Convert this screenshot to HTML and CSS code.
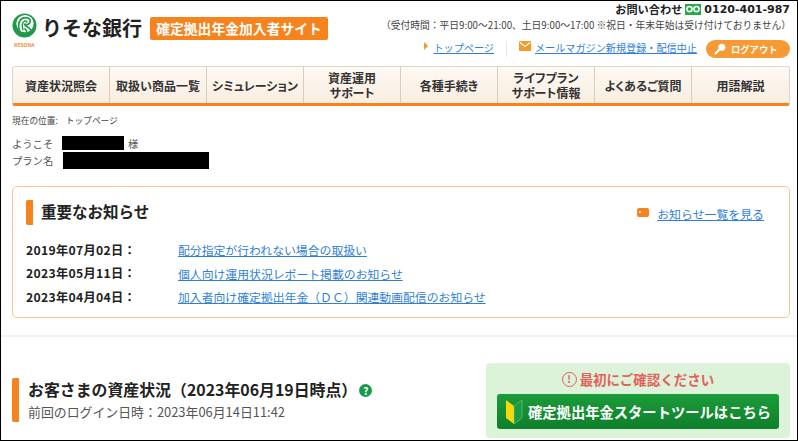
FILE: index.html
```html
<!DOCTYPE html>
<html lang="ja">
<head>
    <meta charset="UTF-8">
    <meta name="viewport" content="width=device-width, initial-scale=1.0">
    <title>確定拠出年金加入者サイト</title>
    <link rel="stylesheet" href="styles.css">
</head>
<body>
    <div class="page">
        <div class="header">
            <div class="logoArea">
                <div class="logo">
                    <svg class="logoMark" viewBox="0 0 26 26" width="25" height="25">
                        <circle cx="13" cy="13" r="12.500" fill="#1f9a4a"/>
                        <circle cx="13.500" cy="11" r="9" fill="#fff"/>
                        <path d="M8 19C5.500 13 7 6.500 12 5C16 4 19.500 6 19 9C18.500 12 15 12.500 12.500 11.500" fill="none" stroke="#1f9a4a" stroke-width="1.800"/>
                        <path d="M11.500 18C10 14 10.500 9.500 13 8.500C15 8 16 9 15 10" fill="none" stroke="#1f9a4a" stroke-width="1.500"/>
                        <path d="M13 13C16.500 14 19.500 17 20.500 20" fill="none" stroke="#1f9a4a" stroke-width="1.800"/>
                        <path d="M13 16C14.500 17.500 15.500 19 16 21" fill="none" stroke="#1f9a4a" stroke-width="1.500"/>
                    </svg>
                    <span class="logoSub">RESONA</span>
                </div>
                <span class="logoName">りそな銀行</span>
                <span class="siteBadge">確定拠出年金加入者サイト</span>
            </div>
            <div class="headRight">
                <div class="tel">
                    お問い合わせ
                    <svg class="freeDial" viewBox="0 0 16 11" width="16" height="11">
                        <rect width="16" height="11" fill="#27a84a"/>
                        <circle cx="4.500" cy="5" r="2.600" fill="none" stroke="#fff" stroke-width="1.500"/>
                        <circle cx="11.500" cy="5" r="2.600" fill="none" stroke="#fff" stroke-width="1.500"/>
                    </svg>
                    <span class="telNum">0120-401-987</span>
                </div>
                <div class="hours">（受付時間：平日9:00～21:00、土日9:00～17:00 ※祝日・年末年始は受け付けておりません）</div>
                <div class="headLinks">
                    <span class="arrow"></span>
                    <a href="#" class="topLink">トップページ</a>
                    <span class="headSep"></span>
                    <svg class="mailIcon" viewBox="0 0 12 10" width="12" height="10">
                        <rect width="12" height="10" rx="1" fill="#f39a27"/>
                        <path d="M1 1.500L6 5.500L11 1.500" fill="none" stroke="#fff" stroke-width="1.200"/>
                    </svg>
                    <a href="#" class="mailLink">メールマガジン新規登録・配信中止</a>
                    <div class="logout">
                        <svg viewBox="0 0 14 14" width="13" height="13">
                            <circle cx="9.500" cy="4.500" r="3.800" fill="#fff"/>
                            <path d="M7 7L2 12" stroke="#fff" stroke-width="2.400"/>
                        </svg>
                        ログアウト
                    </div>
                </div>
            </div>
        </div>

        <ul class="nav">
            <li><span>資産状況照会</span></li>
            <li><span>取扱い商品一覧</span></li>
            <li><span>シミュレーション</span></li>
            <li><span class="twoLine">資産運用<br>サポート</span></li>
            <li><span>各種手続き</span></li>
            <li><span class="twoLine">ライフプラン<br>サポート情報</span></li>
            <li><span>よくあるご質問</span></li>
            <li><span>用語解説</span></li>
        </ul>

        <div class="crumb"><span>現在の位置:</span><span>トップページ</span></div>

        <div class="userRow">
            <span class="userLabel">ようこそ</span>
            <span class="mask maskName"></span>
            <span class="sama">様</span>
        </div>
        <div class="userRow planRow">
            <span class="userLabel">プラン名</span>
            <span class="mask maskPlan"></span>
        </div>

        <div class="notice">
            <div class="noticeHead">
                <h2 class="noticeTitle">重要なお知らせ</h2>
                <div class="noticeMore">
                    <span class="tagIcon"></span>
                    <a href="#">お知らせ一覧を見る</a>
                </div>
            </div>
            <div class="newsRow"><span class="newsDate">2019年07月02日：</span><a href="#">配分指定が行われない場合の取扱い</a></div>
            <div class="newsRow"><span class="newsDate">2023年05月11日：</span><a href="#">個人向け運用状況レポート掲載のお知らせ</a></div>
            <div class="newsRow"><span class="newsDate">2023年04月04日：</span><a href="#">加入者向け確定拠出年金（ＤＣ）関連動画配信のお知らせ</a></div>
        </div>

        <div class="line"></div>

        <div class="assets">
            <div class="assetsHead">
                <h2>お客さまの資産状況（2023年06月19日時点）<span class="help">?</span></h2>
                <p>前回のログイン日時：2023年06月14日11:42</p>
            </div>
            <div class="startBox">
                <div class="startNote">
                    <span class="exclaim">!</span>最初にご確認ください
                </div>
                <div class="startBtn">
                    <svg viewBox="0 0 18 26" width="18" height="26">
                        <path d="M9 7L1 1V19L9 25Z" fill="#f5d90a"/>
                        <path d="M9 7L17 1V19L9 25Z" fill="#1c9a3f" stroke="#7fc98f" stroke-width="0.600"/>
                    </svg>
                    確定拠出年金スタートツールはこちら
                </div>
            </div>
        </div>
    </div>
</body>
</html>
```

FILE: styles.css
```css
*{
    padding: 0;
    margin: 0;
    list-style: none;
    box-sizing: border-box;
}
html,body{
    height: 441px;
    overflow: hidden;
    background-color: #fff;
}
body{
    font-family: "Noto Sans CJK JP", "Open Sans", sans-serif;
    color: #333;
}
a{
    color: #2f7fd6;
}
.page{
    width: 798px;
    height: 441px;
    border: 1px solid #000;
    padding: 0 7px 0 11px;
    overflow: hidden;
}

/* header */
.header{
    display: flex;
    justify-content: space-between;
    height: 65px;
}
.logoArea{
    display: flex;
    align-items: flex-start;
    padding-top: 12px;
}
.logo{
    width: 30px;
    display: flex;
    flex-direction: column;
}
.logoSub{
    margin-top: 3px;
    padding-left: 2px;
    font-size: 5px;
    line-height: 7px;
    font-weight: 700;
    color: #e8913a;
}
.logoName{
    font-size: 20px;
    line-height: 30px;
    font-weight: 700;
    color: #222;
    width: 108px;
    white-space: nowrap;
}
.siteBadge{
    margin-top: 4px;
    width: 178px;
    height: 23px;
    background-color: #f5841f;
    border-radius: 2px;
    color: #fff;
    font-size: 13.800px;
    line-height: 23px;
    font-weight: 700;
    text-align: center;
}
.headRight{
    display: flex;
    flex-direction: column;
    align-items: flex-end;
}
.tel{
    height: 16px;
    display: flex;
    align-items: center;
    font-size: 11.200px;
    font-weight: 700;
    color: #222;
}
.freeDial{
    margin: 0 3px 0 3px;
}
.telNum{
    font-family: "DejaVu Sans", sans-serif;
    font-size: 11px;
}
.hours{
    height: 18px;
    margin-right: -1px;
    font-size: 9.750px;
    line-height: 16px;
    color: #444;
    white-space: nowrap;
}
.headLinks{
    display: flex;
    align-items: center;
    height: 22px;
    margin-top: 3px;
    font-size: 10.150px;
}
.headLinks a{
    margin-top: -4px;
}
.arrow{
    width: 0;
    height: 0;
    border-left: 4px solid #f39a27;
    border-top: 4px solid transparent;
    border-bottom: 4px solid transparent;
    margin: -6px 5px 0 0;
}
.headSep{
    width: 1px;
    height: 16px;
    background-color: #e8e8e8;
    margin: 0 12px;
}
.mailIcon{
    margin: -6px 4px 0 0;
}
.logout{
    width: 84px;
    height: 18px;
    margin-left: 9px;
    background-color: #f79a34;
    border-radius: 9px;
    display: flex;
    align-items: center;
    padding-left: 7px;
    gap: 5px;
    color: #fff;
    font-size: 9.300px;
    font-weight: 700;
}

/* nav */
.nav{
    display: flex;
    width: 778px;
    height: 40px;
    background: linear-gradient(#fdf9f3, #f9ede0);
    border: 1px solid #e0d6c8;
    border-bottom: 3px solid #f5841f;
    border-radius: 3px;
}
.nav li{
    width: 97px;
    display: flex;
    align-items: center;
    justify-content: center;
    text-align: center;
    font-size: 12px;
    line-height: 15px;
    font-weight: 700;
    color: #333;
    white-space: nowrap;
    font-feature-settings: "palt";
    border-right: 1px solid #d9cdbc;
}
.nav li:last-child{
    border-right: 0;
    flex: 1;
}
.twoLine{
    margin-top: -1px;
}

.crumb{
    display: flex;
    gap: 8px;
    margin-top: 6px;
    height: 17px;
    font-size: 8.700px;
    line-height: 17px;
    color: #444;
}
.userRow{
    display: flex;
    align-items: center;
    height: 14px;
    margin-top: 7px;
    font-size: 10.300px;
    color: #555;
}
.planRow{
    height: 17px;
    margin-top: 2px;
}
.userLabel{
    width: 50px;
}
.mask{
    background-color: #000;
    height: 100%;
}
.maskName{
    width: 62px;
}
.maskPlan{
    width: 146px;
    margin-left: 1px;
}
.sama{
    margin-left: 4px;
}

/* notice */
.notice{
    width: 778px;
    height: 132px;
    margin-top: 17px;
    padding: 13px 13px 0;
    border: 1px solid #f8c58a;
    border-radius: 5px;
}
.noticeHead{
    display: flex;
    justify-content: space-between;
    align-items: center;
    height: 25px;
    margin-bottom: 13px;
}
.noticeTitle{
    height: 25px;
    padding-left: 8px;
    border-left: 7px solid #f5841f;
    border-radius: 2px;
    font-size: 15.500px;
    line-height: 23px;
    font-weight: 700;
    color: #222;
}
.noticeMore{
    display: flex;
    align-items: center;
    gap: 8px;
    margin: 2px 12px 0 0;
    font-size: 11.900px;
}
.tagIcon{
    display: flex;
    align-items: center;
    width: 12px;
    height: 9px;
    margin-top: -3px;
    padding-left: 2px;
    background-color: #f5841f;
    border-radius: 2px;
}
.tagIcon::before{
    content: "";
    width: 2px;
    height: 2px;
    background-color: #ffd9b0;
}
.newsRow{
    display: flex;
    height: 23.500px;
    align-items: center;
    font-size: 11.850px;
}
.newsDate{
    width: 152px;
    font-size: 12.200px;
    letter-spacing: 0.300px;
    font-weight: 700;
    color: #222;
}

.line{
    height: 2px;
    margin: 17px -7px 0 -11px;
    background-color: #f1f1f1;
}

/* assets */
.assets{
    display: flex;
    justify-content: space-between;
    margin-top: 26px;
}
.assetsHead{
    margin-top: 15px;
    height: 44px;
    padding-left: 9px;
    border-left: 7px solid #f5841f;
    border-radius: 2px;
}
.assetsHead h2{
    display: flex;
    align-items: center;
    font-size: 15.900px;
    line-height: 24px;
    font-weight: 700;
    color: #222;
}
.assetsHead p{
    font-size: 12.900px;
    line-height: 20px;
    color: #555;
}
.help{
    width: 13px;
    height: 13px;
    margin-left: 2px;
    border-radius: 50%;
    background-color: #1a9a4a;
    color: #fff;
    font-size: 10px;
    line-height: 13px;
    text-align: center;
}
.startBox{
    width: 304px;
    height: 75px;
    padding: 4px 11px 0;
    background-color: #dcf3da;
    border-radius: 4px;
}
.startNote{
    display: flex;
    justify-content: center;
    align-items: center;
    height: 27px;
    padding-bottom: 3px;
    font-size: 13.500px;
    font-weight: 700;
    color: #e2605a;
}
.exclaim{
    width: 15px;
    height: 15px;
    margin-right: 3px;
    border: 1.500px solid #e2605a;
    border-radius: 50%;
    font-size: 10px;
    line-height: 12px;
    text-align: center;
}
.startBtn{
    display: flex;
    align-items: center;
    gap: 5px;
    height: 35px;
    padding-left: 8px;
    background: linear-gradient(#1c9c3c, #0e7f2a);
    border-radius: 3px;
    color: #fff;
    font-size: 14.300px;
    font-weight: 700;
    white-space: nowrap;
}
```
